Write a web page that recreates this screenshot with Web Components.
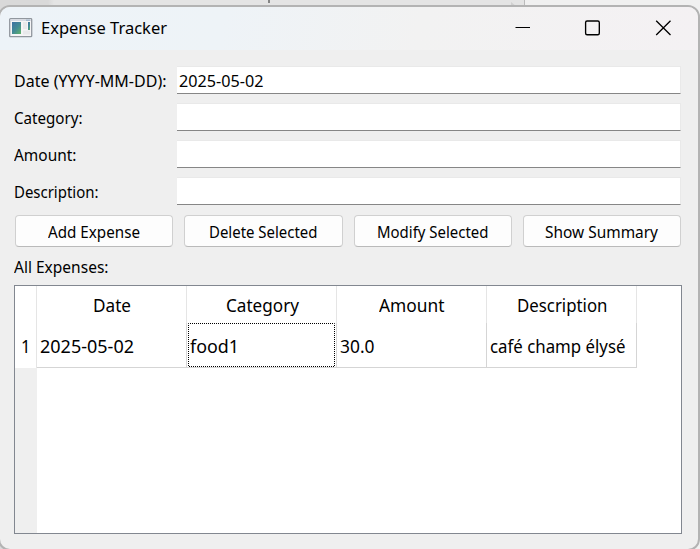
<!DOCTYPE html>
<html lang="en"><head><meta charset="utf-8"><title>Expense Tracker</title>
<style>
html,body{margin:0;height:100%;overflow:hidden}
body{font:16.5px/22px "Noto Sans","Open Sans",sans-serif;color:#000;background:#e4e4e4}
</style></head><body>
<desktop-backdrop>
<app-window>
<title-bar slot="title"><fit-text width="126">Expense Tracker</fit-text></title-bar>
<form-field><fit-text slot="label" width="152.5">Date (YYYY-MM-DD):</fit-text><fit-text width="84.5">2025-05-02</fit-text></form-field>
<form-field><fit-text slot="label" width="68.5">Category:</fit-text></form-field>
<form-field><fit-text slot="label" width="62.5">Amount:</fit-text></form-field>
<form-field><fit-text slot="label" width="84.5">Description:</fit-text></form-field>
<button-row>
<push-button><fit-text width="92">Add Expense</fit-text></push-button>
<push-button><fit-text width="108.5">Delete Selected</fit-text></push-button>
<push-button><fit-text width="111.5">Modify Selected</fit-text></push-button>
<push-button><fit-text width="113">Show Summary</fit-text></push-button>
</button-row>
<section-label><fit-text width="94.5">All Expenses:</fit-text></section-label>
<expense-table></expense-table>
</app-window>
</desktop-backdrop>
<script>
const define=(name,css,html)=>customElements.define(name,class extends HTMLElement{
  constructor(){super();this.attachShadow({mode:'open'}).innerHTML=`<style>${css}</style>${html}`}
});
define('desktop-backdrop',`
:host{display:block;box-sizing:border-box;position:relative;height:549px;padding-top:5px;overflow:hidden;background:linear-gradient(90deg,#d9d9d9 0 48px,#e4e4e4 54px 524px,#f0f0f0 525px)}
i{position:absolute;top:0}
.a{left:268px;width:2px;height:3px;background:#858585}
.b{left:524px;width:1px;height:6px;background:#bbb}
.c{left:511px;top:2px;border:4px solid transparent;border-left:5px solid #d0d0d0}`,
`<i class="a"></i><i class="b"></i><i class="c"></i><slot></slot>`);
define('app-window',`
:host{display:block;box-sizing:border-box;position:relative;width:702px;height:546px;margin-left:-2px;border:2px solid #b3b3b3;border-radius:12px;background:#efefef;overflow:hidden}
main{padding:16px 17px 0 14px;display:flex;flex-direction:column;gap:9px}`,
`<slot name="title"></slot><main><slot></slot></main>`);
define('title-bar',`
:host{display:flex;align-items:center;height:43px;box-sizing:border-box;padding:0 27px 2px 9px;background:linear-gradient(100deg,#edf3f8 0,#eef3f7 32%,#f2f2f2 60%,#f4f1f3 100%);font-size:17px}
.icon{width:24px;height:20px;margin-right:8px}
.text{flex:1}.ctl{width:16px;height:16px;margin-left:54px}
.ctl:last-child{margin-left:55px}`,
`<svg class="icon" viewBox="0 0 24 20"><defs><linearGradient id="g" x1="0" y1="0" x2=".9" y2="1"><stop stop-color="#3d70a2"/><stop offset=".55" stop-color="#438b94"/><stop offset="1" stop-color="#5eb06d"/></linearGradient></defs>
<rect x=".7" y=".7" width="22" height="18" rx=".8" fill="#f5f5f6" stroke="#91979e" stroke-width="1.3"/><path d="M1.5 2.3h20.5" stroke="#d5dae3" stroke-width="1.5"/><path d="M17 2.2h4" stroke="#8dacc5"/>
<rect x="3" y="4" width="9" height="12" fill="url(#g)"/><path d="M14 4h4v7h-4zM14 12.5h7v4h-7z" fill="#e8e9eb"/><path d="M19 4h2v8h-2z" fill="url(#g)"/></svg>
<span class="text"><slot></slot></span>
<svg class="ctl" viewBox="0 0 16 16"><path d="M1.5 7.5h15" stroke="#000"/></svg>
<svg class="ctl" viewBox="0 0 16 16"><rect x="1.6" y="1" width="13.7" height="13.7" rx="1.5" fill="none" stroke="#000" stroke-width="1.35"/></svg>
<svg class="ctl" viewBox="0 0 16 16"><path d="M1.2.7 15.5 15M15.5.7 1.2 15" stroke="#000" stroke-width="1.3"/></svg>`);
define('form-field',`
:host{display:grid;grid-template-columns:163px 504px;height:28px}
label{padding-top:4px}
.box{box-sizing:border-box;background:#fff;border:solid #e9e9e9;border-width:1px 1px 1px 0;border-bottom-color:#868686;padding:3px 2px 0}`,
`<label><slot name="label"></slot></label><div class="box"><slot></slot></div>`);
define('button-row',`:host{display:flex;gap:11px;height:32px;padding:0 0 0 1px;margin-top:1px}`,`<slot></slot>`);
define('push-button',`
:host{flex:1;box-sizing:border-box;display:flex;justify-content:center;padding:5px 0 0 0;background:#fdfdfd;border:1px solid #d0d0d0;border-bottom-color:#bababa;border-radius:4px}`,`<slot></slot>`);
define('section-label',`:host{display:block;height:29px;}`,`<slot></slot>`);
define('expense-table',`
:host{display:block;box-sizing:border-box;width:668px;height:249px;margin-top:-9px;border:1px solid #828790;background:linear-gradient(90deg,#efefef 22px,#fff 22px);font-size:17.3px}
.grid{display:grid;grid-template-columns:22px repeat(4,150px);grid-template-rows:37px 45px;background:#fff;width:622px}
.grid>div{box-sizing:border-box;border-right:1px solid #e5e5e5;padding:9px 0 0 1px;text-align:center}
.grid>.cell{text-align:left;border-color:#d5d5d5;border-bottom:1px solid #d5d5d5;padding:13px 0 0 3px}
.grid>.num{padding:13px 0 0 1px}
.grid>.focus{padding:0}
.focus svg{display:block;position:absolute}.focus{position:relative}.focus fit-text{margin:13px 0 0 3px}`,
`<div class="grid"><div></div><div><fit-text width="38">Date</fit-text></div><div><fit-text width="73">Category</fit-text></div><div><fit-text width="65.5">Amount</fit-text></div><div><fit-text width="90.5">Description</fit-text></div>
<div class="num"><fit-text width="9.5">1</fit-text></div><div class="cell"><fit-text width="94">2025-05-02</fit-text></div>
<div class="cell focus"><svg width="149" height="44"><rect x="1.5" y=".5" width="146" height="43" fill="none" stroke="#000" stroke-dasharray="1 1" stroke-dashoffset=".5"/></svg><fit-text width="49">food1</fit-text></div>
<div class="cell"><fit-text width="34.5">30.0</fit-text></div><div class="cell"><fit-text width="135.5">café champ élysé</fit-text></div></div>`);
// Text condensed or widened horizontally to a given width.
// Defined last, so that the containers' font sizes already apply when it measures.
customElements.define('fit-text',class extends HTMLElement{
  constructor(){super();this.attachShadow({mode:'open'}).innerHTML=`<style>
  :host{display:inline-block;white-space:nowrap;text-align:left;vertical-align:top}
  span{display:inline-block;transform-origin:0 50%}</style><span><slot></slot></span>`}
  connectedCallback(){
    const s=this.shadowRoot.querySelector('span'),w=+this.getAttribute('width');
    s.style.transform='none';
    this.style.width='max-content';
    const natural=s.getBoundingClientRect().width;
    this.style.width=w+'px';
    s.style.transform=`scaleX(${w/natural})`;
  }
});
for(const table of document.querySelectorAll('expense-table'))customElements.upgrade(table.shadowRoot);
</script></body></html>
